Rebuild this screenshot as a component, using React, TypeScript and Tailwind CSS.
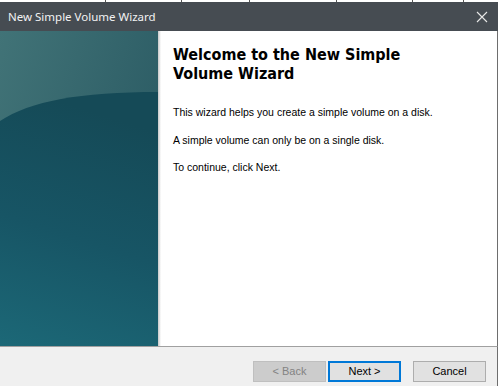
import React from "react";

function SidePanel() {
  return (
    <svg width="158" height="315" viewBox="0 0 158 315" className="block">
      <defs>
        <linearGradient id="top" x1="0" y1="0" x2="1" y2="0.6">
          <stop offset="0" stopColor="#417377" />
          <stop offset="1" stopColor="#2a5a63" />
        </linearGradient>
        <linearGradient id="bot" x1="0.2" y1="0" x2="0" y2="1">
          <stop offset="0" stopColor="#154a57" />
          <stop offset="0.5" stopColor="#175565" />
          <stop offset="1" stopColor="#1c6877" />
        </linearGradient>
      </defs>
      <rect x="0" y="0" width="158" height="315" fill="url(#top)" />
      <path d="M0 90 C 30 70, 80 61, 158 61 L158 315 L0 315 Z" fill="url(#bot)" />
    </svg>
  );
}

export default function App() {
  const body = { fontFamily: '"Liberation Sans", Arial, sans-serif' };
  return (
    <div className="w-[498px] h-[386px] overflow-hidden flex flex-col bg-white">
      <div className="h-[2px] bg-white flex">
        <div className="w-[105px]" />
        <div className="w-[1px] bg-[#555]" />
        <div className="w-[75px]" />
        <div className="w-[1px] bg-[#555]" />
        <div className="w-[67px]" />
        <div className="w-[1px] bg-[#555]" />
        <div className="w-[86px]" />
        <div className="w-[1px] bg-[#555]" />
        <div className="w-[75px]" />
        <div className="w-[1px] bg-[#555]" />
        <div className="w-[50px]" />
        <div className="w-[1px] bg-[#555]" />
      </div>
      <div
        className="h-[29px] bg-[#464c52] flex items-center justify-between pl-[8px] pr-[10px] text-[#f2f2f2] text-[11.5px]"
        style={{ fontFamily: '"Noto Sans", "Open Sans", sans-serif' }}
      >
        <span>New Simple Volume Wizard</span>
        <svg width="12" height="12" viewBox="0 0 12 12">
          <path d="M1 1 L11 11 M11 1 L1 11" stroke="#e8e8e8" strokeWidth="1.1" />
        </svg>
      </div>
      <div className="flex h-[315px] border-r border-[#6e6e6e]">
        <SidePanel />
        <div className="w-[3px] bg-gradient-to-r from-[#c8c8c8] to-white" />
        <div className="flex-1 bg-white pl-[12px] pt-[14px] text-[#000]">
          <div
            className="font-bold text-[16px] leading-[19px] text-black font-stretch-condensed"
            style={{ fontFamily: '"DejaVu Sans", Verdana, sans-serif' }}
          >
            Welcome to the New Simple
            <br />
            Volume Wizard
          </div>
          <div className="text-[10.5px] leading-[13px] mt-[23px]" style={body}>
            This wizard helps you create a simple volume on a disk.
          </div>
          <div className="text-[10.5px] leading-[13px] mt-[15px]" style={body}>
            A simple volume can only be on a single disk.
          </div>
          <div className="text-[10.5px] leading-[13px] mt-[14px]" style={body}>
            To continue, click Next.
          </div>
        </div>
      </div>
      <div className="flex-1 bg-[#f0f0f0] border-t border-[#a0a0a0] border-r border-r-[#6e6e6e] flex items-start justify-end pt-[14px] pr-[11px] text-[11px]" style={body}>
        <div className="w-[73px] h-[21px] bg-[#cccccc] border border-[#bfbfbf] text-[#838383] flex items-center justify-center">
          &lt; Back
        </div>
        <div className="w-[73px] h-[21px] ml-[2px] bg-[#e1e1e1] border-2 border-[#0078d7] text-black flex items-center justify-center">
          Next &gt;
        </div>
        <div className="w-[73px] h-[21px] ml-[12px] bg-[#e1e1e1] border border-[#adadad] text-black flex items-center justify-center">
          Cancel
        </div>
      </div>
    </div>
  );
}
